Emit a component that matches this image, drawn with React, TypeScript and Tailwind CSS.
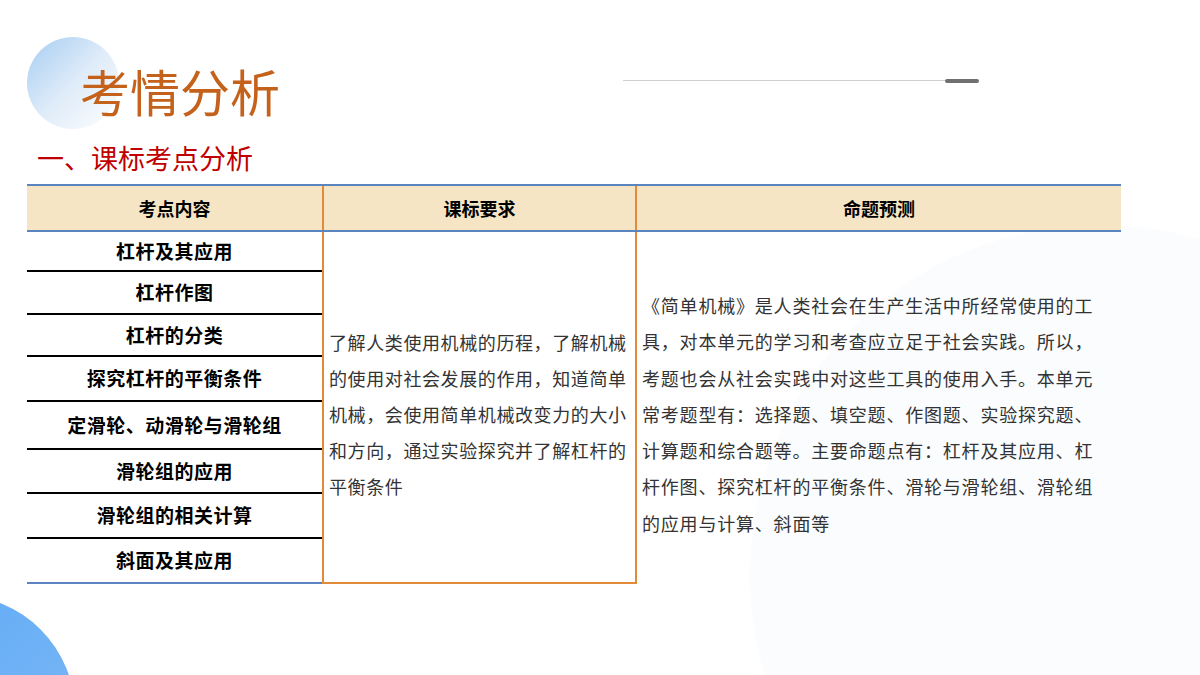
const rows: [string, string][] = [
  ["杠杆及其应用", "h-[40px]"],
  ["杠杆作图", "h-[43px]"],
  ["杠杆的分类", "h-[42px]"],
  ["探究杠杆的平衡条件", "h-[45px]"],
  ["定滑轮、动滑轮与滑轮组", "h-[48px]"],
  ["滑轮组的应用", "h-[44px]"],
  ["滑轮组的相关计算", "h-[45px]"],
  ["斜面及其应用", "h-[45px]"],
];

export default function App() {
  return (
    <div
      className="relative w-[1200px] h-[675px] overflow-hidden bg-white"
      style={{ fontFamily: '"Noto Sans CJK SC", "Noto Sans", sans-serif' }}
    >
      {/* decorations */}
      <div className="absolute left-[27px] top-[37px] w-[92px] h-[92px] rounded-full bg-gradient-to-br from-[#9cc7f0] via-[#dbe9f8] to-white opacity-90" />
      <div className="absolute left-[-160px] top-[595px] w-[235px] h-[235px] rounded-full bg-gradient-to-br from-[#5aa9f5] to-[#7fb8f5]" />
      <div className="absolute right-[-250px] bottom-[-250px] w-[700px] h-[700px] rounded-full bg-[#fafcfe]" />
      <div className="absolute left-[623px] top-[80px] w-[322px] h-px bg-[#cfcfcf]" />
      <div className="absolute left-[945px] top-[79px] w-[34px] h-[4px] rounded bg-[#707070]" />

      <div className="relative pl-[80px] pt-[54px] text-[50px] leading-[72px] text-[#c4621c]">考情分析</div>
      <div className="relative pl-[37px] pt-[12px] text-[27px] leading-[40px] text-[#c00000]">一、课标考点分析</div>

      <div className="relative ml-[27px] mt-[6px] w-[1094px]">
        <div className="flex h-[48px] bg-[#f6e5c5] border-y-2 border-[#5b85c0] text-[18px] font-bold text-black">
          <div className="w-[295px] flex items-center justify-center">考点内容</div>
          <div className="w-[315px] flex items-center justify-center border-x-2 border-[#e08a3a]">课标要求</div>
          <div className="flex-1 flex items-center justify-center">命题预测</div>
        </div>
        <div className="flex">
          <div className="w-[295px] flex flex-col">
            {rows.map(([t, h], i) => (
              <div
                key={t}
                className={`${h} flex items-center justify-center text-[19px] tracking-[0.5px] font-bold text-black border-b-2 ${
                  i === rows.length - 1 ? "border-[#5b85c0]" : "border-black"
                }`}
              >
                {t}
              </div>
            ))}
          </div>
          <div className="w-[315px] border-x-2 border-b-2 border-[#e08a3a] flex items-center pl-[5px] pr-[2px] pt-[14px] text-[18px] tracking-[0.6px] leading-[36px] text-[#333]">
            了解人类使用机械的历程，了解机械的使用对社会发展的作用，知道简单机械，会使用简单机械改变力的大小和方向，通过实验探究并了解杠杆的平衡条件
          </div>
          <div className="flex-1 pl-[5px] pr-[10px] pt-[55px] text-[18px] tracking-[0.8px] leading-[36.3px] text-[#333]">
            《简单机械》是人类社会在生产生活中所经常使用的工具，对本单元的学习和考查应立足于社会实践。所以，考题也会从社会实践中对这些工具的使用入手。本单元常考题型有：选择题、填空题、作图题、实验探究题、计算题和综合题等。主要命题点有：杠杆及其应用、杠杆作图、探究杠杆的平衡条件、滑轮与滑轮组、滑轮组的应用与计算、斜面等
          </div>
        </div>
      </div>
    </div>
  );
}
